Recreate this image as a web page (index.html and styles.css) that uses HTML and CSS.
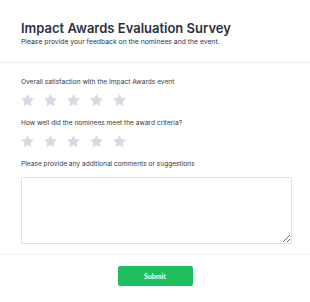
FILE: index.html
```html
<!DOCTYPE html>
<html lang="en">
<head>
    <meta charset="UTF-8">
    <meta name="viewport" content="width=device-width, initial-scale=1">
    <title>Impact Awards Evaluation Survey</title>
    <link rel="stylesheet" href="styles.css">
</head>
<body>
    <div class="survey">
        <div class="header">
            <h1>Impact Awards Evaluation Survey</h1>
            <p class="subtitle">Please provide your <span class="hl">feedback</span> on the <span class="hl">nominees</span> and the event.</p>
        </div>

        <div class="body">
            <div class="question">
                <label>Overall satisfaction with the <span class="hl">Impact Awards</span> event</label>
                <div class="stars">
                    <svg class="star" viewBox="0 0 24 24"><path d="M12 1.5l3.2 6.6 7.3 1-5.3 5.1 1.3 7.2L12 18l-6.5 3.4 1.3-7.2L1.5 9.1l7.3-1z"/></svg>
                    <svg class="star" viewBox="0 0 24 24"><path d="M12 1.5l3.2 6.6 7.3 1-5.3 5.1 1.3 7.2L12 18l-6.5 3.4 1.3-7.2L1.5 9.1l7.3-1z"/></svg>
                    <svg class="star" viewBox="0 0 24 24"><path d="M12 1.5l3.2 6.6 7.3 1-5.3 5.1 1.3 7.2L12 18l-6.5 3.4 1.3-7.2L1.5 9.1l7.3-1z"/></svg>
                    <svg class="star" viewBox="0 0 24 24"><path d="M12 1.5l3.2 6.6 7.3 1-5.3 5.1 1.3 7.2L12 18l-6.5 3.4 1.3-7.2L1.5 9.1l7.3-1z"/></svg>
                    <svg class="star" viewBox="0 0 24 24"><path d="M12 1.5l3.2 6.6 7.3 1-5.3 5.1 1.3 7.2L12 18l-6.5 3.4 1.3-7.2L1.5 9.1l7.3-1z"/></svg>
                </div>
            </div>

            <div class="question">
                <label>How well did the <span class="hl">nominees</span> meet the award criteria?</label>
                <div class="stars">
                    <svg class="star" viewBox="0 0 24 24"><path d="M12 1.5l3.2 6.6 7.3 1-5.3 5.1 1.3 7.2L12 18l-6.5 3.4 1.3-7.2L1.5 9.1l7.3-1z"/></svg>
                    <svg class="star" viewBox="0 0 24 24"><path d="M12 1.5l3.2 6.6 7.3 1-5.3 5.1 1.3 7.2L12 18l-6.5 3.4 1.3-7.2L1.5 9.1l7.3-1z"/></svg>
                    <svg class="star" viewBox="0 0 24 24"><path d="M12 1.5l3.2 6.6 7.3 1-5.3 5.1 1.3 7.2L12 18l-6.5 3.4 1.3-7.2L1.5 9.1l7.3-1z"/></svg>
                    <svg class="star" viewBox="0 0 24 24"><path d="M12 1.5l3.2 6.6 7.3 1-5.3 5.1 1.3 7.2L12 18l-6.5 3.4 1.3-7.2L1.5 9.1l7.3-1z"/></svg>
                    <svg class="star" viewBox="0 0 24 24"><path d="M12 1.5l3.2 6.6 7.3 1-5.3 5.1 1.3 7.2L12 18l-6.5 3.4 1.3-7.2L1.5 9.1l7.3-1z"/></svg>
                </div>
            </div>

            <div class="question">
                <label>Please provide any <span class="hl">additional comments</span> or suggestions</label>
                <textarea></textarea>
            </div>
        </div>

        <div class="footer">
            <button class="submit">Submit</button>
        </div>
    </div>
</body>
</html>
```

FILE: styles.css
```css
body {
    margin: 0;
    font-family: Inter, "Noto Sans", sans-serif;
    background: #fff;
    color: #333844;
}

.header {
    padding: 20px 21px 15px;
    border-bottom: 1px solid #eceef3;
}

h1 {
    margin: 0;
    font-size: 13px;
    font-weight: 600;
    line-height: 16px;
    color: #2d3140;
}

.subtitle {
    margin: 1px 0 0;
    font-size: 6.8px;
    line-height: 10px;
    color: #2c3448;
}

.subtitle .hl {
    color: #23396b;
}

.body {
    padding: 14px 21px 10px;
    border-bottom: 1px solid #f0f1f4;
}

.question {
    margin-bottom: 11px;
}

.question:last-child {
    margin-bottom: 0;
}

label {
    display: block;
    font-size: 6.6px;
    line-height: 10px;
    color: #333844;
}

label .hl {
    color: #3a3752;
}

.stars {
    display: flex;
    gap: 10px;
    margin-top: 7px;
}

.star {
    width: 13px;
    height: 13px;
    fill: #d6dae4;
    stroke: #d6dae4;
    stroke-width: 1.5;
    stroke-linejoin: round;
}

textarea {
    display: block;
    box-sizing: border-box;
    width: 271px;
    height: 67px;
    margin-top: 8px;
    border: 1px solid #dfe0ea;
    border-radius: 1px;
    resize: vertical;
}

.footer {
    display: flex;
    justify-content: center;
    padding: 11px 0;
}

.submit {
    width: 75px;
    height: 20px;
    border: none;
    border-radius: 2px;
    background: #1dbf5e;
    color: #fff;
    font-family: Lato, sans-serif;
    font-size: 7px;
    font-weight: 700;
}
```
